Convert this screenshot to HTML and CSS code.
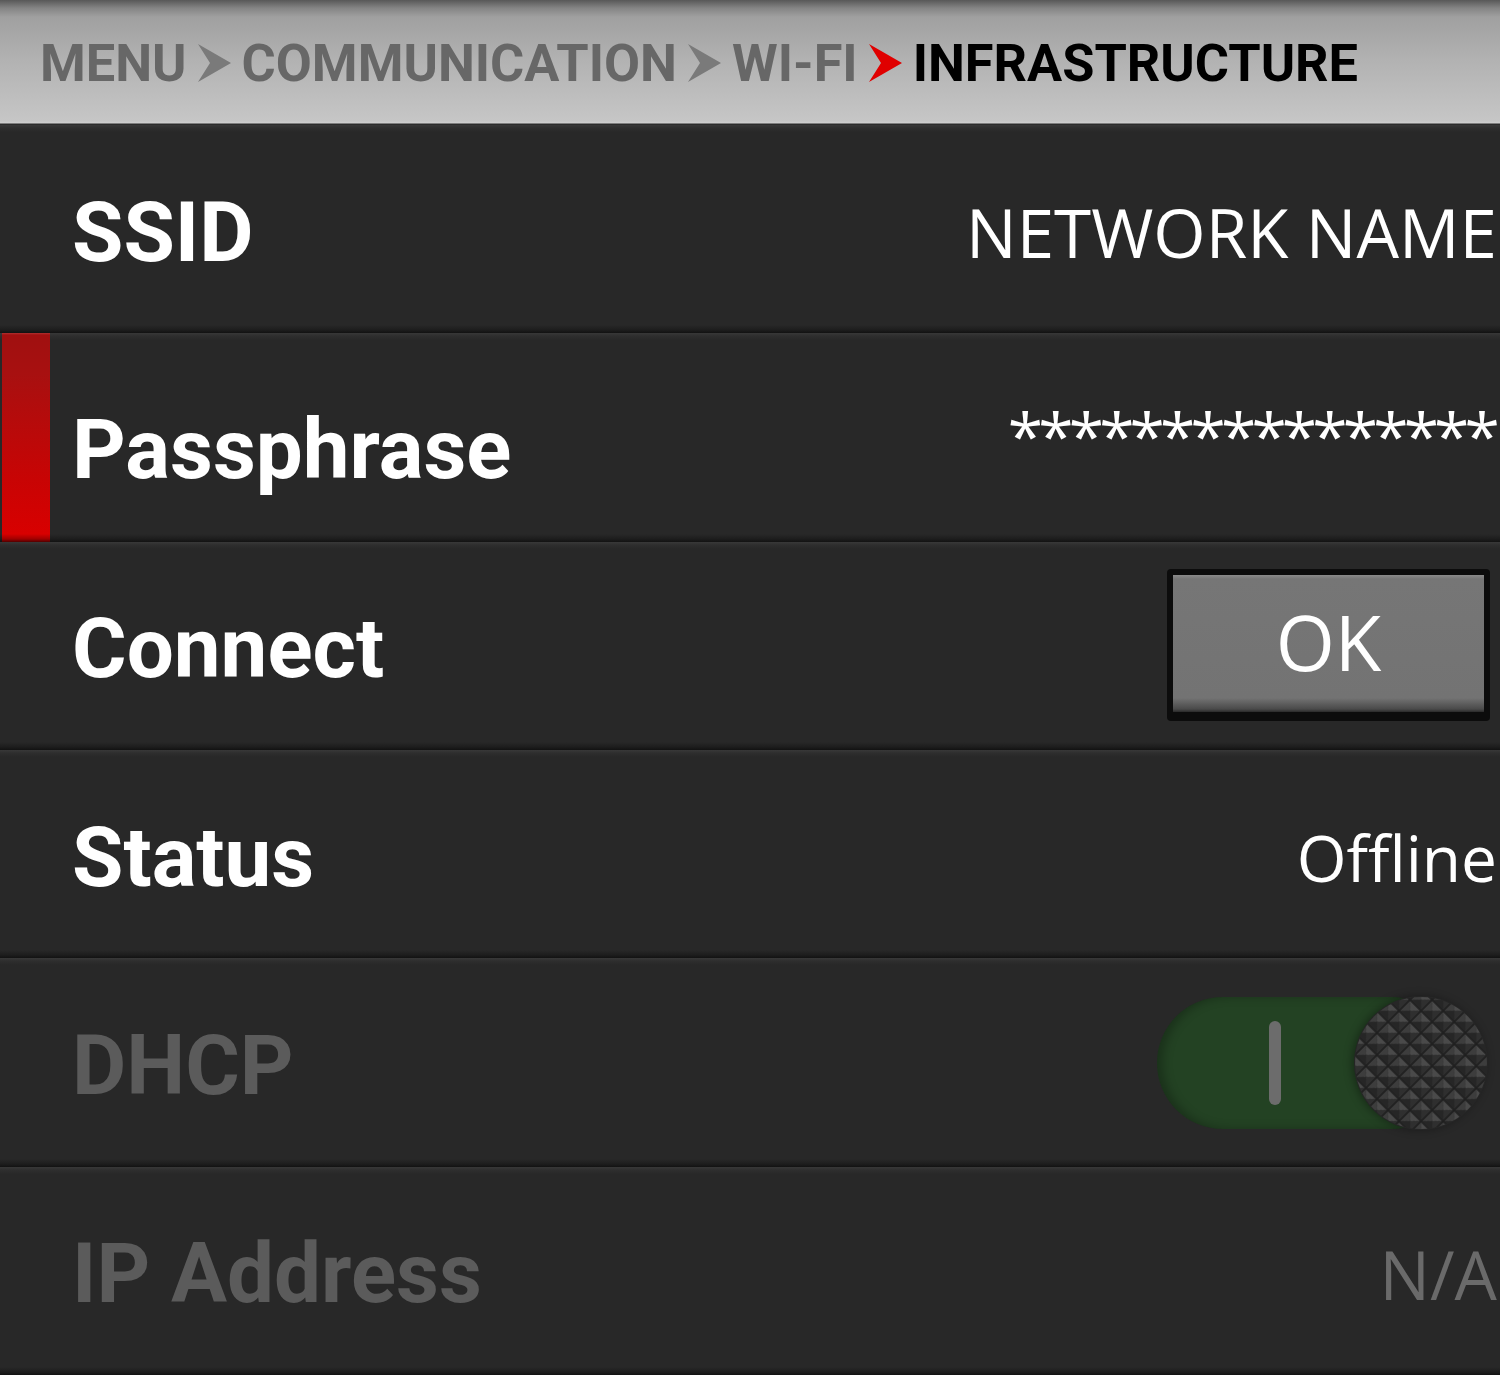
FILE: index.html
```html
<!DOCTYPE html>
<html>
<head>
<meta charset="utf-8">
<title>Infrastructure</title>
<link rel="stylesheet" href="styles.css">
</head>
<body>
<div class="screen">
  <header class="crumbs">
    <span class="crumb">MENU</span>
    <svg class="chev" viewBox="0 0 33 38"><polygon points="0,0 33,19 0,38 12,19"/></svg>
    <span class="crumb">COMMUNICATION</span>
    <svg class="chev" viewBox="0 0 33 38"><polygon points="0,0 33,19 0,38 12,19"/></svg>
    <span class="crumb">WI-FI</span>
    <svg class="chev chev--active" viewBox="0 0 33 38"><polygon points="0,0 33,19 0,38 12,19"/></svg>
    <span class="crumb crumb--current">INFRASTRUCTURE</span>
  </header>
  <main class="list">
    <div class="row">
      <span class="label">SSID</span>
      <span class="value value--large">NETWORK NAME</span>
    </div>
    <div class="row row--selected">
      <span class="select-bar"></span>
      <span class="label label--low">Passphrase</span>
      <span class="value value--mask">****************</span>
    </div>
    <div class="row">
      <span class="label">Connect</span>
      <span class="button"><span class="button-face">OK</span></span>
    </div>
    <div class="row">
      <span class="label">Status</span>
      <span class="value">Offline</span>
    </div>
    <div class="row row--disabled">
      <span class="label">DHCP</span>
      <span class="toggle">
        <span class="track"><span class="on-mark"></span></span>
        <svg class="knob" viewBox="0 0 136 136">
          <defs>
            <pattern id="studs" width="15.6" height="15.6" patternUnits="userSpaceOnUse" patternTransform="rotate(45 68 68)">
              <rect width="15.6" height="15.6" fill="#1d1d1d"/>
              <polygon points="0.8,0.8 14.8,0.8 7.8,7.8" fill="#4a4a4a"/>
              <polygon points="0.8,0.8 7.8,7.8 0.8,14.8" fill="#3d3d3d"/>
              <polygon points="14.8,0.8 14.8,14.8 7.8,7.8" fill="#2f2f2f"/>
              <polygon points="0.8,14.8 7.8,7.8 14.8,14.8" fill="#262626"/>
            </pattern>
          </defs>
          <circle cx="68" cy="68" r="67" fill="#262626"/>
          <circle cx="68" cy="68" r="66" fill="url(#studs)"/>
        </svg>
      </span>
    </div>
    <div class="row row--disabled">
      <span class="label">IP Address</span>
      <span class="value value--na">N/A</span>
    </div>
  </main>
</div>
</body>
</html>
```
FILE: styles.css
```css
html, body {
  margin: 0;
  padding: 0;
  background: #282828;
}

.screen {
  width: 1500px;
  height: 1375px;
  overflow: hidden;
  display: flex;
  flex-direction: column;
}

.crumbs {
  height: 125px;
  box-sizing: border-box;
  flex: none;
  display: flex;
  align-items: center;
  padding-left: 40px;
  padding-top: 1px;
  background: linear-gradient(#585858 0, #848484 8px, #a0a0a0 17px, #b2b2b2 60px, #c6c6c6 121px, #d0d0d0 123px, #2c2c2c 124px, #2c2c2c 125px);
  font-family: Roboto, "Liberation Sans", sans-serif;
  font-weight: 700;
  font-size: 52.3px;
  color: #676767;
  white-space: nowrap;
}

.crumb--current {
  color: #000;
}

.chev {
  width: 33px;
  height: 38px;
  margin: 0 11px;
  fill: #7a7a7a;
  flex: none;
}

.chev--active {
  fill: #e00000;
}

.list {
  height: 1250px;
  display: grid;
  grid-template-rows: repeat(6, 1fr);
}

.row {
  display: flex;
  align-items: center;
  justify-content: space-between;
  padding: 6px 3px 0 72px;
  background: linear-gradient(#383838 0, #2e2e2e 3px, #282828 7px, #282828 calc(100% - 8px), #1d1d1d calc(100% - 3px), #121212 100%);
}

.label {
  font-family: Roboto, "Liberation Sans", sans-serif;
  font-weight: 700;
  font-size: 83.5px;
  color: #fff;
  margin-right: auto;
  white-space: nowrap;
}

.label--low {
  margin-top: 18px;
}

.value {
  font-family: "Open Sans", "Noto Sans", sans-serif;
  font-size: 64px;
  color: #fff;
  white-space: nowrap;
}

.value--large {
  font-size: 67.3px;
}

.value--na {
  font-size: 67px;
}

.value--mask {
  margin-bottom: 10px;
  letter-spacing: -4.8px;
  margin-right: 2px;
}

.row--selected {
  padding-left: 2px;
}

.select-bar {
  align-self: stretch;
  width: 48px;
  margin: -6px 22px 0 0;
  background: linear-gradient(#b03030 0, #a01010 2px, #a81010 20%, #c80404 70%, #d80000 calc(100% - 8px), #a00000 calc(100% - 3px), #500000 100%);
}

.row--disabled .label {
  color: #5b5b5b;
}

.row--disabled .value {
  color: #6a6a6a;
}

.button {
  width: 323px;
  height: 152px;
  box-sizing: border-box;
  margin-right: 7px;
  margin-top: -8px;
  padding: 6px 6px 9px 6px;
  background: #0c0c0c;
  border-radius: 4px;
  display: flex;
}

.button-face {
  flex: 1;
  display: flex;
  align-items: center;
  justify-content: center;
  background: linear-gradient(#8a8a8a 0, #767676 4px, #737373 calc(100% - 14px), #4a4a4a calc(100% - 3px), #2a2a2a 100%);
  font-family: "Open Sans", "Noto Sans", sans-serif;
  font-size: 76px;
  color: #fff;
  padding-bottom: 4px;
}

.toggle {
  position: relative;
  width: 332px;
  height: 136px;
  margin-right: 8px;
  margin-top: -4px;
  display: flex;
  align-items: center;
}

.track {
  width: 300px;
  height: 132px;
  border-radius: 66px;
  background: #234223;
  box-shadow: inset 6px 0 10px rgba(0,0,0,0.25);
  display: flex;
  align-items: center;
}

.on-mark {
  width: 12px;
  height: 84px;
  margin-left: 112px;
  border-radius: 6px;
  background: #6c6c6c;
}

.knob {
  position: absolute;
  right: 0;
  top: 0;
  width: 136px;
  height: 136px;
  filter: drop-shadow(-2px 0 4px rgba(0,0,0,0.35));
}
```
